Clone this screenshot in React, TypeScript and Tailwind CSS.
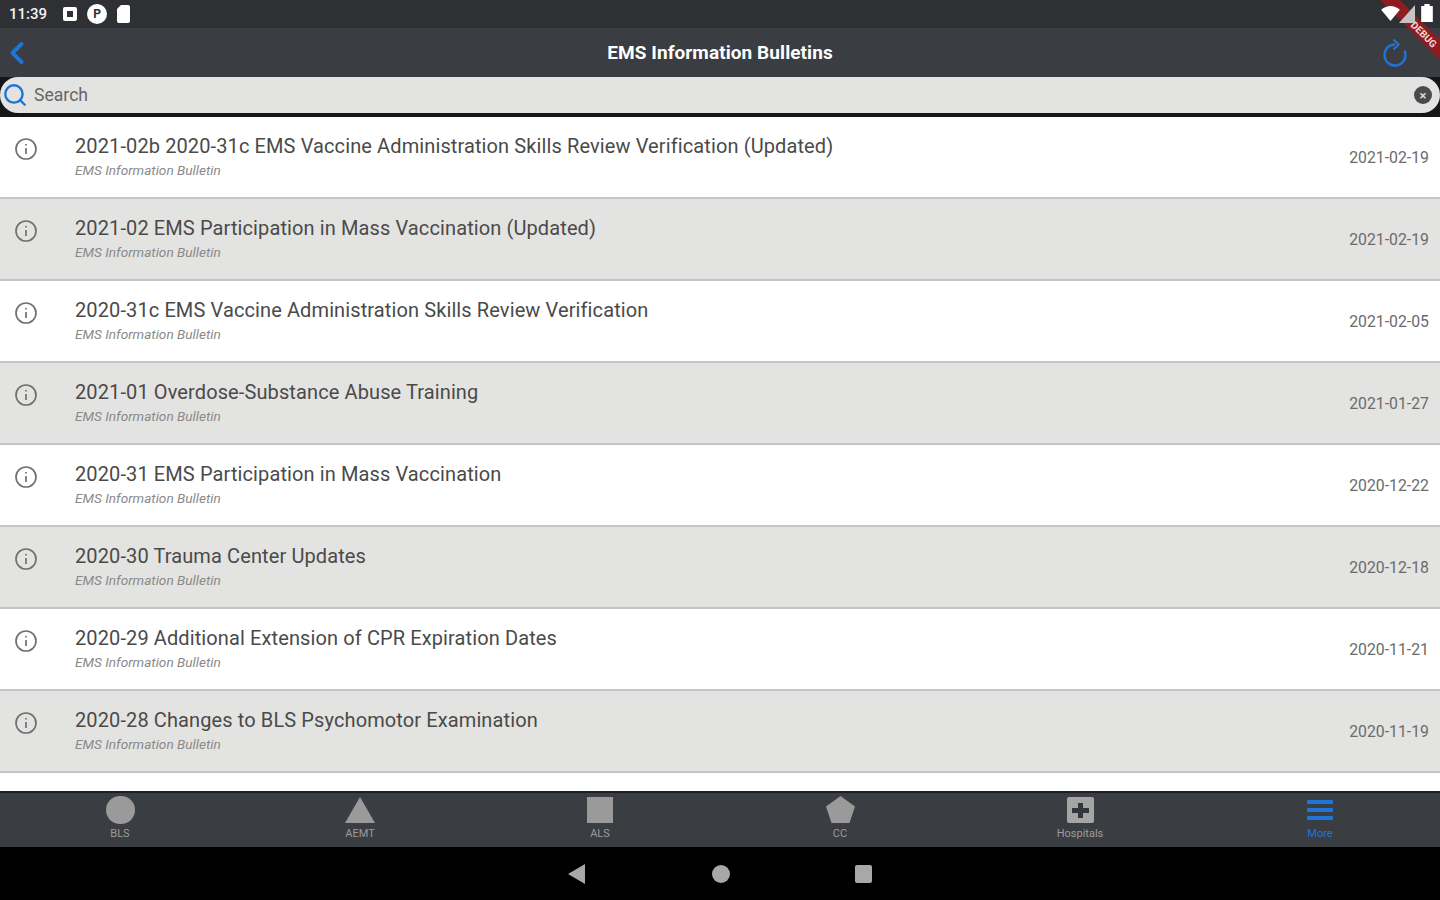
import { ChevronLeft, Search } from 'lucide-react'

const bulletins = [
	{ title: '2021-02b 2020-31c EMS Vaccine Administration Skills Review Verification (Updated)', date: '2021-02-19' },
	{ title: '2021-02 EMS Participation in Mass Vaccination (Updated)', date: '2021-02-19' },
	{ title: '2020-31c EMS Vaccine Administration Skills Review Verification', date: '2021-02-05' },
	{ title: '2021-01 Overdose-Substance Abuse Training', date: '2021-01-27' },
	{ title: '2020-31 EMS Participation in Mass Vaccination', date: '2020-12-22' },
	{ title: '2020-30 Trauma Center Updates', date: '2020-12-18' },
	{ title: '2020-29 Additional Extension of CPR Expiration Dates', date: '2020-11-21' },
	{ title: '2020-28 Changes to BLS Psychomotor Examination', date: '2020-11-19' },
]

function InfoIcon() {
	return (
		<svg width="24" height="24" viewBox="0 0 24 24" fill="none" stroke="#707070" strokeWidth="1.7">
			<circle cx="12" cy="12" r="10" />
			<path d="M12 11v6" />
			<path d="M12 7v1.6" />
		</svg>
	)
}

function Row({ title, date, shaded }: { title: string; date: string; shaded: boolean }) {
	return (
		<div className={`flex h-[82px] items-center border-b-2 border-[#c4c5c4] pr-[11px] ${shaded ? 'bg-[#e3e3e1]' : 'bg-white'}`}>
			<div className="flex w-[75px] shrink-0 self-start pt-[20px] pl-[14px]">
				<InfoIcon />
			</div>
			<div className="flex grow flex-col">
				<div className="text-[20px] leading-[26px] tracking-[0.11px] text-[#4a4a4a]">{title}</div>
				<div className="text-[13.6px] leading-[23px] text-[#8a8a8a] italic">EMS Information Bulletin</div>
			</div>
			<div className="pt-[2px] text-[15.8px] text-[#6b6b6b]">{date}</div>
		</div>
	)
}

function NavItem({ label, active, children }: { label: string; active?: boolean; children: React.ReactNode }) {
	return (
		<div className="flex w-[240px] flex-col items-center pt-[2px]">
			<div className="flex h-[29px] items-center justify-center">{children}</div>
			<div className={`mt-[3px] text-[11px] leading-[14px] ${active ? 'text-[#1f74d6]' : 'text-[#9c9c9c]'}`}>{label}</div>
		</div>
	)
}

export default function App() {
	return (
		<div className="relative flex h-[900px] w-[1440px] flex-col overflow-hidden bg-white font-['Roboto',sans-serif]">
			<div className="relative flex h-[28px] shrink-0 items-center gap-[10px] bg-[#2e3034] pl-[9px] text-[15px] font-medium text-[#f2f2f2]">
				<span className="mr-[6px]">11:39</span>
				<div className="flex size-[14px] items-center justify-center rounded-[2px] bg-white">
					<div className="size-[6px] bg-[#2e3034]" />
				</div>
				<div className="flex size-[20px] items-center justify-center rounded-full bg-white text-[12px] leading-none font-bold text-[#2e3034]">P</div>
				<svg width="13" height="18" viewBox="0 0 13 18" fill="white">
					<path d="M4 0h7a2 2 0 0 1 2 2v14a2 2 0 0 1-2 2H2a2 2 0 0 1-2-2V4z" />
				</svg>
			</div>

			<div className="relative flex h-[49px] shrink-0 items-center justify-center bg-[#3a3d42] pt-[2px]">
				<ChevronLeft className="absolute top-[7px] left-[-1px] text-[#1f74d6]" size={36} strokeWidth={2.6} />
				<div className="text-[19px] font-bold tracking-[0.08px] text-white">EMS Information Bulletins</div>
				<svg className="absolute top-[10px] right-[31px]" width="28" height="30" viewBox="0 0 28 30" fill="none" stroke="#1f74d6" strokeWidth="2.4">
					<path d="M23.5 12.5A10.5 10.5 0 1 1 14 6.5" />
					<path d="M12.5 1.5L17.5 6.5 12.5 11.5" />
				</svg>
			</div>

			{/* debug corner banner, the status icons sit on top of it */}
			<div className="absolute top-[18px] right-[-35px] flex h-[14px] w-[120px] rotate-45 items-center justify-center bg-[#8e1c20] pl-[26px] text-[10px] font-bold text-[#f0d8d8]">
				DEBUG
			</div>
			<svg className="absolute top-[6px] right-[40px] z-10" width="19" height="15" viewBox="0 0 20 16" fill="white">
				<path d="M0 4Q10-4 20 4L10 16z" />
			</svg>
			<svg className="absolute top-[5px] right-[25px] z-10" width="16" height="18" viewBox="0 0 16 18" fill="#c4c4c4">
				<path d="M16 0v18H0z" />
			</svg>
			<svg className="absolute top-[4px] right-[7px] z-10" width="12" height="18" viewBox="0 0 11 17" fill="white">
				<path d="M3 0h5v2h3v15H0V2h3z" />
			</svg>

			<div className="flex h-[40px] shrink-0 bg-[#15161a] pb-[4px]">
				<div className="flex grow items-center rounded-full bg-[#e3e3e1] pr-[8px] pl-[2px]">
					<Search className="text-[#1f74d6]" size={26} strokeWidth={2.2} />
					<div className="ml-[6px] grow text-[17.6px] text-[#666]">Search</div>
					<div className="flex size-[18px] items-center justify-center rounded-full bg-[#4a4a4a] text-[13px] leading-none font-bold text-[#d8d8d8]">×</div>
				</div>
			</div>

			<div className="min-h-0 grow overflow-hidden">
				{bulletins.map((b, i) => (
					<Row key={b.title} title={b.title} date={b.date} shaded={i % 2 === 1} />
				))}
			</div>

			<div className="flex h-[56px] shrink-0 border-t-2 border-[#1d1f24] bg-[#3a3d42]">
				<NavItem label="BLS">
					<div className="h-[28px] w-[29px] rounded-full bg-[#9a9a9a]" />
				</NavItem>
				<NavItem label="AEMT">
					<svg width="30" height="26" viewBox="0 0 30 26" fill="#9a9a9a">
						<path d="M15 0l15 26H0z" />
					</svg>
				</NavItem>
				<NavItem label="ALS">
					<div className="size-[26px] bg-[#9a9a9a]" />
				</NavItem>
				<NavItem label="CC">
					<svg width="29" height="27" viewBox="0 0 29 27" fill="#9a9a9a">
						<path d="M14.5 0L29 10.5 23.5 27h-18L0 10.5z" />
					</svg>
				</NavItem>
				<NavItem label="Hospitals">
					<svg width="27" height="26" viewBox="0 0 27 26">
						<rect width="27" height="26" rx="2" fill="#a5a5a5" />
						<path d="M11 6h5v5h6v5h-6v5h-5v-5H5v-5h6z" fill="#33363a" />
					</svg>
				</NavItem>
				<NavItem label="More" active>
					<div className="flex w-[26px] flex-col gap-[4px]">
						<div className="h-[4px] bg-[#1f74d6]" />
						<div className="h-[4px] bg-[#1f74d6]" />
						<div className="h-[4px] bg-[#1f74d6]" />
					</div>
				</NavItem>
			</div>

			<div className="flex h-[53px] shrink-0 items-center justify-center gap-[125px] bg-black">
				<svg className="mr-[2px]" width="17" height="20" viewBox="0 0 17 20" fill="#a8a8a8">
					<path d="M17 0v20L0 10z" />
				</svg>
				<div className="size-[18px] rounded-full bg-[#a8a8a8]" />
				<div className="h-[18px] w-[17px] rounded-[2px] bg-[#a8a8a8]" />
			</div>
		</div>
	)
}
